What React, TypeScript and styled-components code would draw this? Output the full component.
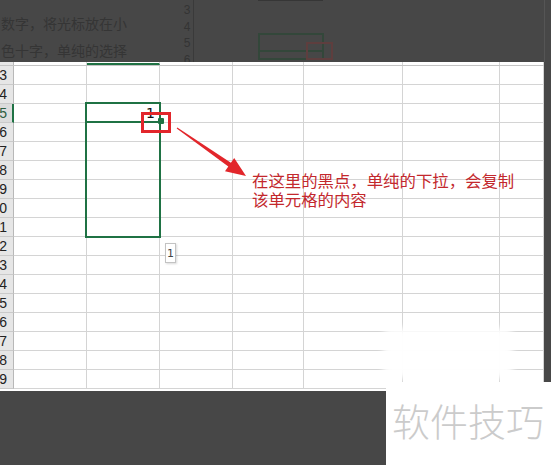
import React from "react";
import styled, { createGlobalStyle } from "styled-components";

const GREEN = "#1f7244";
const RED = "#e2262b";
const GRID = "#d4d4d4";
const DARK = "#474747";
const COLS = "14px 73px 73px 73px 71px 99px 97px 1fr";

const GlobalStyle = createGlobalStyle`
  html, body {
    margin: 0;
    padding: 0;
    background: ${DARK};
  }
  body {
    font-family: "Liberation Sans", "Noto Sans CJK SC", sans-serif;
  }
`;

const Page = styled.div`
  position: relative;
  width: 551px;
  height: 465px;
  overflow: hidden;
  background: ${DARK};
  display: flex;
  flex-direction: column;
`;

/* dimmed picture of the previous step */
const TopStrip = styled.div`
  height: 62px;
  display: flex;
  flex-shrink: 0;
`;

const TopText = styled.div`
  width: 180px;
  padding: 10px 0 0 1px;
  font-family: "Noto Sans CJK SC", sans-serif;
  font-size: 14px;
  line-height: 27px;
  color: #353535;
  white-space: nowrap;
  overflow: hidden;
`;

const TopRowNums = styled.div`
  width: 12px;
  border-right: 1px solid #3a3a3a;
  display: flex;
  flex-direction: column;
  align-items: center;
  padding-top: 2px;
  font-size: 12px;
  line-height: 16.5px;
  color: #343434;
`;

const TopCanvas = styled.div`
  position: relative;
  width: 350px;
  border-right: 1px solid #555;
`;

const DimLine = styled.div`
  position: absolute;
  left: 64px;
  top: 0;
  width: 65px;
  height: 1px;
  background: #363636;
`;

const DimSelection = styled.div`
  position: absolute;
  left: 64px;
  top: 33px;
  width: 66px;
  height: 27px;
  box-sizing: border-box;
  border: 2px solid #33473a;
  &::after {
    content: "";
    position: absolute;
    left: 0;
    right: 0;
    top: 15px;
    height: 2px;
    background: #33473a;
  }
`;

const DimRedBox = styled.div`
  position: absolute;
  left: 112px;
  top: 42px;
  width: 27px;
  height: 18px;
  box-sizing: border-box;
  border: 2px solid #5e3e3e;
`;

const Sheet = styled.div`
  position: relative;
  width: 544px;
  height: 329px;
  flex-shrink: 0;
  background: #fff;
  overflow: hidden;
`;

const HeadStrip = styled.div`
  display: grid;
  grid-template-columns: ${COLS};
  height: 4px;
  border-bottom: 1px solid #c4c4c4;
  box-sizing: border-box;
`;

const HeadCell = styled.div<{ $first?: boolean; $active?: boolean }>`
  box-sizing: border-box;
  border-right: 1px solid ${(p) => (p.$first ? "#b8b8b8" : GRID)};
  background: ${(p) => (p.$first ? "#e6e6e6" : "#fff")};
  border-bottom: ${(p) => (p.$active ? `2px solid ${GREEN}` : "none")};
`;

const Row = styled.div`
  display: grid;
  grid-template-columns: ${COLS};
  height: 19px;
`;

const RowHead = styled.div<{ $active?: boolean }>`
  box-sizing: border-box;
  background: ${(p) => (p.$active ? "#dcdcdc" : "#e6e6e6")};
  border-right: ${(p) => (p.$active ? `2px solid ${GREEN}` : "1px solid #b8b8b8")};
  border-bottom: 1px solid #cacaca;
  display: flex;
  justify-content: flex-end;
  align-items: center;
  padding-right: ${(p) => (p.$active ? "5px" : "6px")};
  overflow: hidden;
  font-size: 14px;
  color: ${(p) => (p.$active ? "#2c5e40" : "#222")};
  white-space: nowrap;
`;

const Cell = styled.div`
  box-sizing: border-box;
  border-right: 1px solid ${GRID};
  border-bottom: 1px solid ${GRID};
  display: flex;
  justify-content: flex-end;
  align-items: flex-end;
  padding: 0 4px 1px 0;
  font-family: "DejaVu Sans", sans-serif;
  font-size: 14px;
  line-height: 16px;
  color: #111;
`;

const Selection = styled.div`
  position: absolute;
  left: 85px;
  top: 40px;
  width: 76px;
  height: 136px;
  box-sizing: border-box;
  border: 2px solid ${GREEN};
`;

const ActiveEdge = styled.div`
  position: absolute;
  left: 0;
  right: 0;
  top: 17px;
  height: 2px;
  background: ${GREEN};
`;

const FillHandle = styled.div`
  position: absolute;
  right: -5px;
  top: 14px;
  width: 6px;
  height: 6px;
  background: ${GREEN};
  border-radius: 1px;
`;

const RedBox = styled.div`
  position: absolute;
  left: 141px;
  top: 50px;
  width: 30px;
  height: 21px;
  box-sizing: border-box;
  border: 3px solid ${RED};
`;

const Tip = styled.div`
  position: absolute;
  left: 165px;
  top: 181px;
  width: 11px;
  height: 20px;
  box-sizing: border-box;
  border: 1px solid #c3c3c3;
  background: #fff;
  box-shadow: 1px 1px 2px rgba(0, 0, 0, 0.15);
  display: flex;
  align-items: center;
  justify-content: center;
  font-family: "DejaVu Sans", sans-serif;
  font-size: 11px;
  color: #444;
`;

const Note = styled.div`
  position: absolute;
  left: 252px;
  top: 109px;
  font-family: "Noto Sans CJK SC", sans-serif;
  font-size: 16.4px;
  line-height: 18.5px;
  color: #c3282d;
  white-space: nowrap;
`;

/* full-width comma, as the reference font sets it */
const Comma = styled.span`
  display: inline-block;
  width: 1em;
`;

const Smudge = styled.div`
  position: absolute;
  left: 383px;
  top: 266px;
  width: 130px;
  height: 50px;
  background: rgba(255, 255, 255, 0.96);
  filter: blur(3px);
  border-radius: 8px;
`;

const ArrowSvg = styled.svg`
  position: absolute;
  left: 0;
  top: 0;
  pointer-events: none;
`;

const Watermark = styled.div`
  position: absolute;
  left: 386px;
  top: 382px;
  width: 165px;
  height: 83px;
  box-sizing: border-box;
  background: #fff;
  padding: 17px 0 0 6px;
  font-family: "Noto Sans CJK SC", sans-serif;
  font-weight: 300;
  font-size: 38px;
  line-height: 42px;
  color: #cbcbcb;
  white-space: nowrap;
`;

const rows = Array.from({ length: 17 }, (_, i) => 13 + i);

export default function App() {
  return (
    <>
      <GlobalStyle />
      <Page>
        <TopStrip>
          <TopText>
            <div>数字，将光标放在小</div>
            <div>色十字，单纯的选择</div>
          </TopText>
          <TopRowNums>
            <span>3</span>
            <span>4</span>
            <span>5</span>
            <span>6</span>
          </TopRowNums>
          <TopCanvas>
            <DimLine />
            <DimSelection />
            <DimRedBox />
          </TopCanvas>
        </TopStrip>

        <Sheet>
          <HeadStrip>
            <HeadCell $first />
            <HeadCell />
            <HeadCell $active />
            <HeadCell />
            <HeadCell />
            <HeadCell />
            <HeadCell />
            <HeadCell />
          </HeadStrip>
          {rows.map((n) => (
            <Row key={n}>
              <RowHead $active={n === 15}>{n}</RowHead>
              <Cell />
              <Cell>{n === 15 ? "1" : ""}</Cell>
              <Cell />
              <Cell />
              <Cell />
              <Cell />
              <Cell />
            </Row>
          ))}

          <Selection>
            <ActiveEdge />
            <FillHandle />
          </Selection>
          <RedBox />
          <Tip>1</Tip>
          <Smudge />
          <ArrowSvg width="544" height="329" viewBox="0 0 544 329">
            <polygon
              points="177.3,65.6 230.9,100.8 234.2,96 246,114 225,109.2 228.3,104.4 176.7,66.4"
              fill={RED}
            />
          </ArrowSvg>
          <Note>
            <div>
              在这里的黑点<Comma>，</Comma>单纯的下拉<Comma>，</Comma>会复制
            </div>
            <div>该单元格的内容</div>
          </Note>
        </Sheet>

        <Watermark>软件技巧</Watermark>
      </Page>
    </>
  );
}
